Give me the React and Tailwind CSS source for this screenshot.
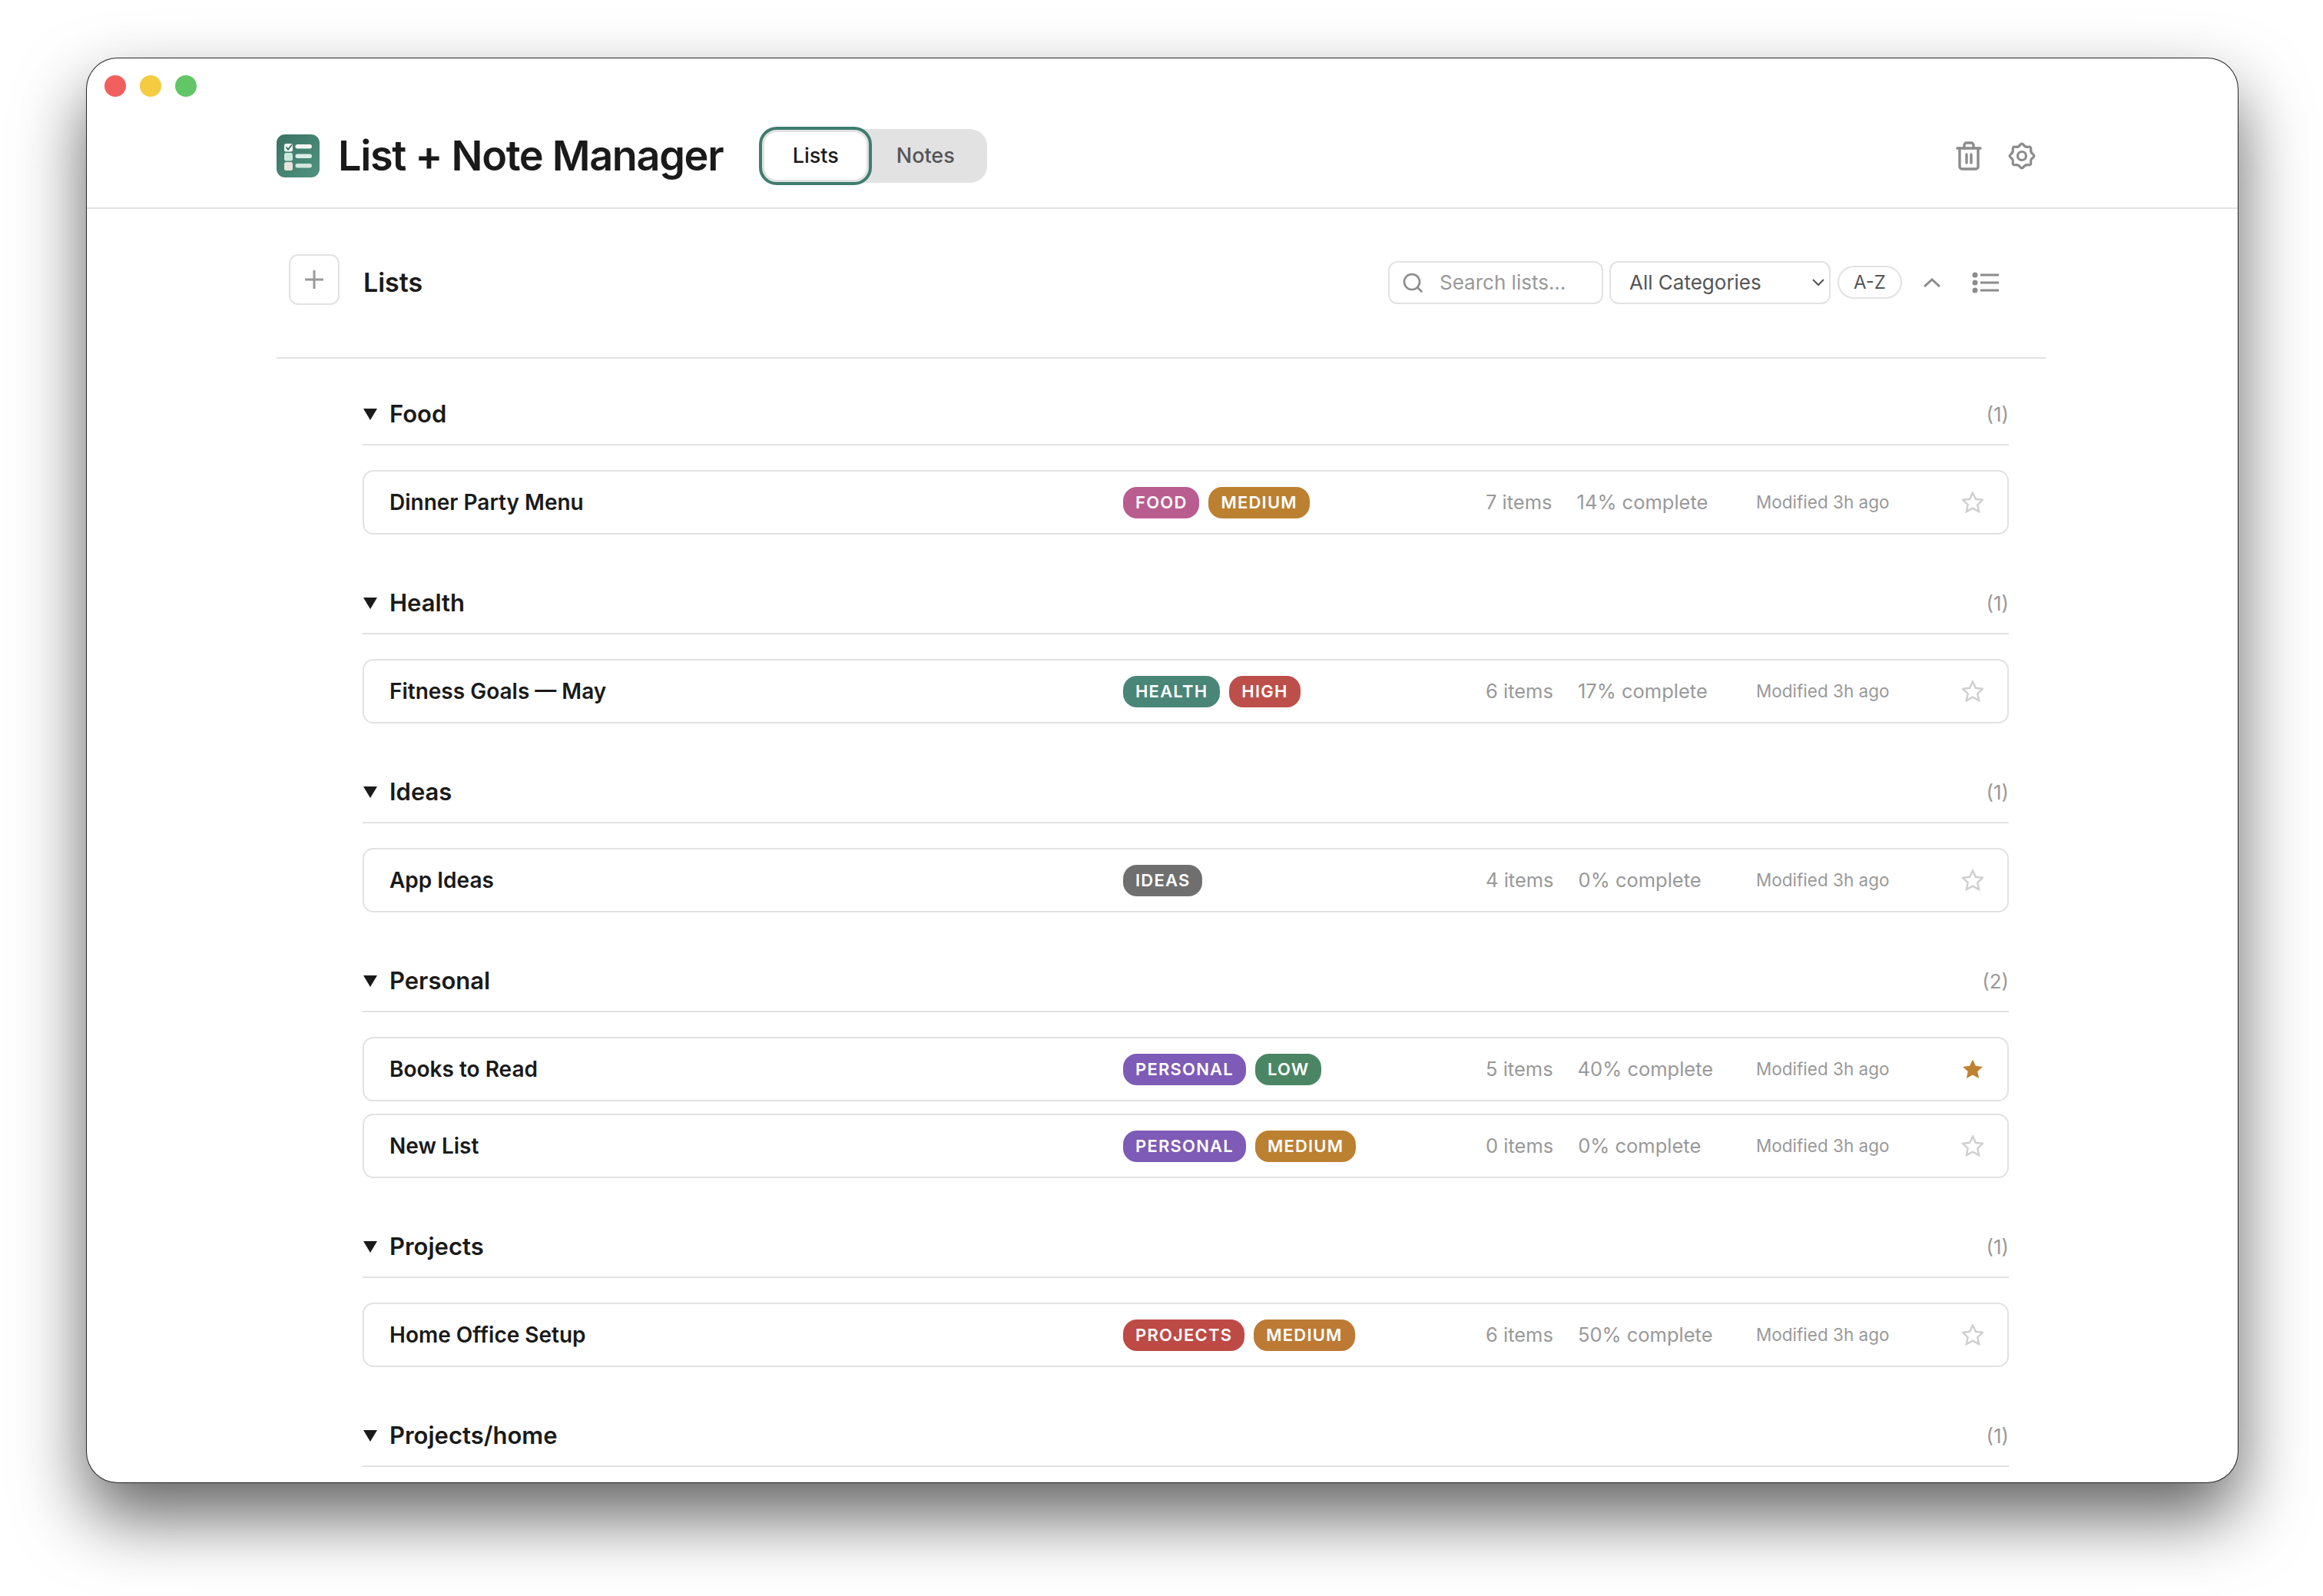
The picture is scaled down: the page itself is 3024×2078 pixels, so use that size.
import React from "react";

const groups = [
  {
    name: "Food",
    lists: [
      { name: "Dinner Party Menu", tags: [["FOOD", "bg-[#b95c90]"], ["MEDIUM", "bg-[#bc8031]"]], items: "7 items", done: "14% complete" },
    ],
  },
  {
    name: "Health",
    lists: [
      { name: "Fitness Goals — May", tags: [["HEALTH", "bg-[#4a8678]"], ["HIGH", "bg-[#bd4f4a]"]], items: "6 items", done: "17% complete" },
    ],
  },
  {
    name: "Ideas",
    lists: [
      { name: "App Ideas", tags: [["IDEAS", "bg-[#6f6f6f]"]], items: "4 items", done: "0% complete" },
    ],
  },
  {
    name: "Personal",
    lists: [
      { name: "Books to Read", tags: [["PERSONAL", "bg-[#7d5bb6]"], ["LOW", "bg-[#4a8663]"]], items: "5 items", done: "40% complete", starred: true },
      { name: "New List", tags: [["PERSONAL", "bg-[#7d5bb6]"], ["MEDIUM", "bg-[#bc8031]"]], items: "0 items", done: "0% complete" },
    ],
  },
  {
    name: "Projects",
    lists: [
      { name: "Home Office Setup", tags: [["PROJECTS", "bg-[#bd4a45]"], ["MEDIUM", "bg-[#bc7a35]"]], items: "6 items", done: "50% complete" },
    ],
  },
  { name: "Projects/home", count: 1, lists: [] },
];

function gearPath() {
  const pts = [];
  for (let i = 0; i < 16; i++) {
    const r = i % 2 === 0 ? 17.5 : 12;
    const a = (i * Math.PI) / 8 - Math.PI / 2;
    pts.push([18 + r * Math.cos(a), 18 + r * Math.sin(a)]);
  }
  const mid = (p, q) => [(p[0] + q[0]) / 2, (p[1] + q[1]) / 2];
  let d = "";
  pts.forEach((p, i) => {
    const next = pts[(i + 1) % 16];
    const m = mid(p, next);
    if (i === 0) {
      const s = mid(pts[15], p);
      d += `M${s[0].toFixed(2)} ${s[1].toFixed(2)}`;
    }
    d += `Q${p[0].toFixed(2)} ${p[1].toFixed(2)} ${m[0].toFixed(2)} ${m[1].toFixed(2)}`;
  });
  return d + "Z";
}

function Logo() {
  return (
    <svg width="56" height="56" viewBox="0 0 56 56" className="shrink-0">
      <defs>
        <linearGradient id="logo-bg" x1="0" y1="0" x2="1" y2="1">
          <stop offset="0" stopColor="#3b7263" />
          <stop offset="1" stopColor="#4f9480" />
        </linearGradient>
      </defs>
      <rect width="56" height="56" rx="11" fill="url(#logo-bg)" />
      <rect x="10" y="12" width="11" height="10.5" rx="2.5" fill="#f4f6f4" />
      <path d="M12.5 16.5l2.5 3 5-6" fill="none" stroke="#2f6a5a" strokeWidth="1.8" />
      <rect x="10" y="24" width="11" height="10.5" rx="2.5" fill="#c9e8dc" />
      <rect x="10" y="36" width="11" height="11" rx="2.5" fill="#e8e3dc" />
      <rect x="24.5" y="13" width="21.5" height="5.5" rx="2.7" fill="#f6f8f6" />
      <rect x="24.5" y="25.5" width="21.5" height="5.5" rx="2.7" fill="#dcefe8" />
      <rect x="24.5" y="38" width="21.5" height="5.5" rx="2.7" fill="#d3e6df" />
    </svg>
  );
}

function TrashIcon() {
  return (
    <svg width="34" height="38" viewBox="0 0 34 38" fill="none" stroke="#8c8c8c" strokeWidth="3.4" strokeLinecap="round" strokeLinejoin="round">
      <path d="M2 9h30" />
      <path d="M11 9V5a3 3 0 0 1 3-3h6a3 3 0 0 1 3 3v4" />
      <path d="M5 9v24a3 3 0 0 0 3 3h18a3 3 0 0 0 3-3V9" />
      <path d="M14 17v11M20 17v11" />
    </svg>
  );
}

function GearIcon() {
  return (
    <svg width="36" height="36" viewBox="0 0 36 36" fill="none" stroke="#8c8c8c" strokeWidth="3.2" strokeLinejoin="round">
      <path d={gearPath()} />
      <circle cx="18" cy="18" r="5.5" />
    </svg>
  );
}

function Star({ on }) {
  const d = "M14 1.5l3.9 8.3 9.1 1.1-6.7 6.2 1.8 9L14 21.6 5.9 26.1l1.8-9L1 10.9l9.1-1.1z";
  return (
    <svg width="28" height="28" viewBox="0 0 28 28" className="shrink-0">
      <path d={d} fill={on ? "#c08130" : "none"} stroke={on ? "none" : "#cfcfcf"} strokeWidth="2.4" />
    </svg>
  );
}

function ListCard({ list }) {
  return (
    <div className="flex h-[84px] items-center rounded-[14px] border-2 border-[#e2e2e2] pl-[33px] text-[#999]">
      <div className="w-[955px] text-[28px] font-semibold text-[#1a1a1a]">{list.name}</div>
      <div className="flex w-[472px] gap-3">
        {list.tags.map(([label, color], i) => (
          <span key={i} className={`flex h-[41px] items-center rounded-[18px] px-4 text-[22px] font-semibold tracking-[0.055em] text-white ${color}`}>
            {label}
          </span>
        ))}
      </div>
      <div className="flex w-[352px] gap-8 text-[25.5px]">
        <span>{list.items}</span>
        <span>{list.done}</span>
      </div>
      <div className="w-[268px] text-[22.5px]">Modified 3h ago</div>
      <Star on={list.starred} />
    </div>
  );
}

export default function App() {
  return (
    <div className="h-[2078px] w-[3024px] overflow-hidden bg-white pl-[113px] pt-[76px] font-[Inter,sans-serif]">
      <div className="h-[1854px] w-[2800px] overflow-hidden rounded-[40px] bg-white shadow-[0_0_0_1px_#262626,0_44px_90px_rgba(0,0,0,0.62)]">
        <div className="flex gap-[18px] pl-[23px] pt-[22px]">
          <span className="h-[28px] w-[28px] rounded-full bg-[#f1605e]" />
          <span className="h-[28px] w-[28px] rounded-full bg-[#f5cb42]" />
          <span className="h-[28px] w-[28px] rounded-full bg-[#62c566]" />
        </div>

        <header className="flex items-center border-b-2 border-[#e2e2e2] pb-8 pl-[247px] pr-[263px] pt-[42px]">
          <Logo />
          <h1 className="ml-6 text-[54px] leading-none font-semibold tracking-[-0.025em] text-[#1a1a1a]">List + Note Manager</h1>
          <div className="ml-[50px] flex h-[70px] rounded-[22px] bg-[#e2e2e2] p-1">
            <button className="w-[133px] rounded-[16px] bg-white text-[27px] font-medium text-[#1a1a1a] outline-4 outline-offset-[3px] outline-[#3f7d6e]">
              Lists
            </button>
            <button className="w-[153px] text-[27px] font-medium text-[#555]">Notes</button>
          </div>
          <div className="ml-auto flex items-center gap-[34px]">
            <TrashIcon />
            <GearIcon />
          </div>
        </header>

        <main className="pl-[247px] pr-[250px]">
          <div className="flex h-[195px] border-b-2 border-[#e2e2e2] pb-[61px] pl-4 pr-[60px] pt-[59px]">
            <button className="flex h-[66px] w-[66px] items-center justify-center rounded-[12px] border-2 border-[#e2e2e2]">
              <svg width="26" height="26" viewBox="0 0 26 26" stroke="#999" strokeWidth="3">
                <path d="M13 1v24M1 13h24" />
              </svg>
            </button>
            <h2 className="ml-[31px] self-center text-[34px] font-semibold text-[#1a1a1a]">Lists</h2>
            <div className="ml-auto flex items-center">
              <div className="flex h-[56px] w-[280px] items-center gap-[21px] rounded-[12px] border-2 border-[#e2e2e2] pl-4 text-[26px] text-[#999]">
                <svg width="28" height="28" viewBox="0 0 28 28" fill="none" stroke="#8c8c8c" strokeWidth="2.6" strokeLinecap="round" className="shrink-0">
                  <circle cx="13" cy="13" r="10" />
                  <path d="M20.5 20.5l5 5" />
                </svg>
                Search lists...
              </div>
              <div className="ml-2 flex h-[56px] w-[288px] items-center justify-between rounded-[12px] border-2 border-[#e2e2e2] pl-6 pr-1.5 text-[26px] text-[#555]">
                All Categories
                <svg width="16" height="10" viewBox="0 0 16 10" fill="none" stroke="#555" strokeWidth="2">
                  <path d="M1 1l7 7 7-7" />
                </svg>
              </div>
              <div className="ml-[9px] flex h-[43px] w-[84px] items-center justify-center rounded-full border-2 border-[#e2e2e2] text-[24px] text-[#555]">
                A-Z
              </div>
              <svg width="22" height="12" viewBox="0 0 22 12" fill="none" stroke="#8c8c8c" strokeWidth="3" className="ml-7">
                <path d="M1 11l10-9 10 9" />
              </svg>
              <svg width="36" height="28" viewBox="0 0 36 28" className="ml-[41px]">
                <circle cx="4" cy="4" r="3.5" fill="#8c8c8c" />
                <circle cx="4" cy="14" r="3.5" fill="#8c8c8c" />
                <circle cx="4" cy="24" r="3.5" fill="#8c8c8c" />
                <path d="M11 4h24M11 14h24M11 24h24" stroke="#8c8c8c" strokeWidth="3" />
              </svg>
            </div>
          </div>

          <div className="ml-[112px] w-[2143px] pt-[42px]">
            {groups.map((group) => (
              <section key={group.name} className="mb-[59px]">
                <div className="flex h-[71px] items-start justify-between border-b-2 border-[#e2e2e2]">
                  <div className="flex h-[60px] items-center gap-4 text-[31px] font-semibold text-[#1a1a1a]">
                    <svg width="18" height="15" viewBox="0 0 18 15" className="ml-px">
                      <path d="M0 0h18L9 15z" fill="#1a1a1a" />
                    </svg>
                    {group.name}
                  </div>
                  <span className="flex h-[60px] items-center text-[26px] text-[#999]">
                    ({group.count || group.lists.length})
                  </span>
                </div>
                <div className="mt-8 flex flex-col gap-4">
                  {group.lists.map((list) => (
                    <ListCard key={list.name} list={list} />
                  ))}
                </div>
              </section>
            ))}
          </div>
        </main>
      </div>
    </div>
  );
}
